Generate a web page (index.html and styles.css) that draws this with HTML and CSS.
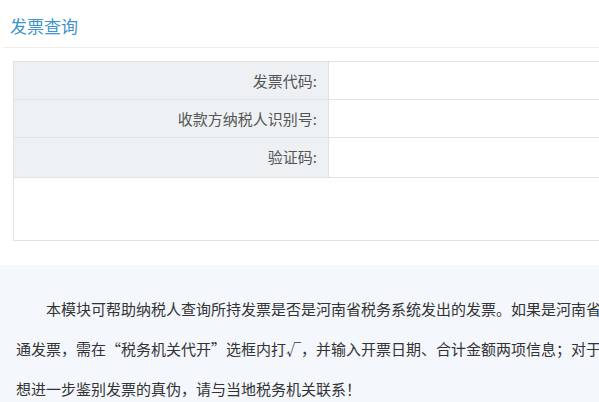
FILE: index.html
```html
<!DOCTYPE html>
<html lang="zh-CN">
  <head>
    <meta charset="UTF-8" />
    <meta name="viewport" content="width=device-width, initial-scale=1.0" />
    <title>发票查询</title>
    <link rel="stylesheet" href="styles.css">
  </head>
  <body>
    <div class="page">
      <!-- 标题 -->
      <div class="page-header">
        <h2 class="page-title">发票查询</h2>
      </div>

      <!-- 查询表单 -->
      <form class="query-form" onsubmit="return false">
        <div class="form-row">
          <label class="form-label" for="fpdm">发票代码:</label>
          <div class="form-field"><input type="text" id="fpdm" class="form-input" /></div>
        </div>
        <div class="form-row">
          <label class="form-label" for="nsrsbh">收款方纳税人识别号:</label>
          <div class="form-field"><input type="text" id="nsrsbh" class="form-input" /></div>
        </div>
        <div class="form-row">
          <label class="form-label" for="yzm">验证码:</label>
          <div class="form-field"><input type="text" id="yzm" class="form-input" /></div>
        </div>
        <div class="form-row form-actions"></div>
      </form>

      <!-- 说明 -->
      <div class="notice">
        <p class="notice-text">本模块可帮助纳税人查询所持发票是否是河南省税务系统发出的发票。如果是河南省税务机关代开的普<br>通发票，需在<span class="quote-open">“</span>税务机关代开<span class="quote-close">”</span>选框内打√，并输入开票日期、合计金额两项信息；对于其他发票，如果您<br>想进一步鉴别发票的真伪，请与当地税务机关联系！</p>
      </div>
    </div>
  </body>
</html>
```

FILE: styles.css
```css
* {
  margin: 0;
  padding: 0;
  box-sizing: border-box;
  font-family: "Microsoft YaHei", "Noto Sans CJK SC", sans-serif;
}

html,
body {
  overflow: hidden;
  background-color: #fff;
}

.page {
  width: 820px;
}

.page-header {
  margin: 0 0 0 3px;
  padding: 11px 0 6px 7px;
  border-bottom: 1px solid #eeeeee;
  height: 48px;
}

.page-title {
  font-size: 17px;
  font-weight: normal;
  line-height: 30px;
  color: #4094cc;
}

.query-form {
  margin: 13px 0 24px 13px;
  border-top: 1px solid #e2e2e2;
  border-left: 1px solid #e2e2e2;
}

.form-row {
  display: flex;
  height: 38px;
  border-bottom: 1px solid #e2e2e2;
}

.form-row:nth-child(3) {
  height: 40px;
}

.form-label {
  width: 315px;
  padding-right: 11px;
  background-color: #eef1f4;
  border-right: 1px solid #e2e2e2;
  text-align: right;
  font-size: 15px;
  line-height: 37px;
  color: #555;
}

.form-field {
  flex: 1;
}

.form-input {
  width: 100%;
  height: 100%;
  border: none;
  outline: none;
  background: transparent;
}

.form-actions {
  height: 63px;
}

.notice {
  background-color: #f4f7fc;
  padding: 24px 0 0 16px;
}

.notice-text {
  font-size: 15px;
  line-height: 40px;
  color: #333;
  text-indent: 2em;
  white-space: nowrap;
}

.quote-open,
.quote-close {
  display: inline-block;
  width: 1em;
  text-indent: 0;
}

.quote-open {
  text-align: right;
}
```
